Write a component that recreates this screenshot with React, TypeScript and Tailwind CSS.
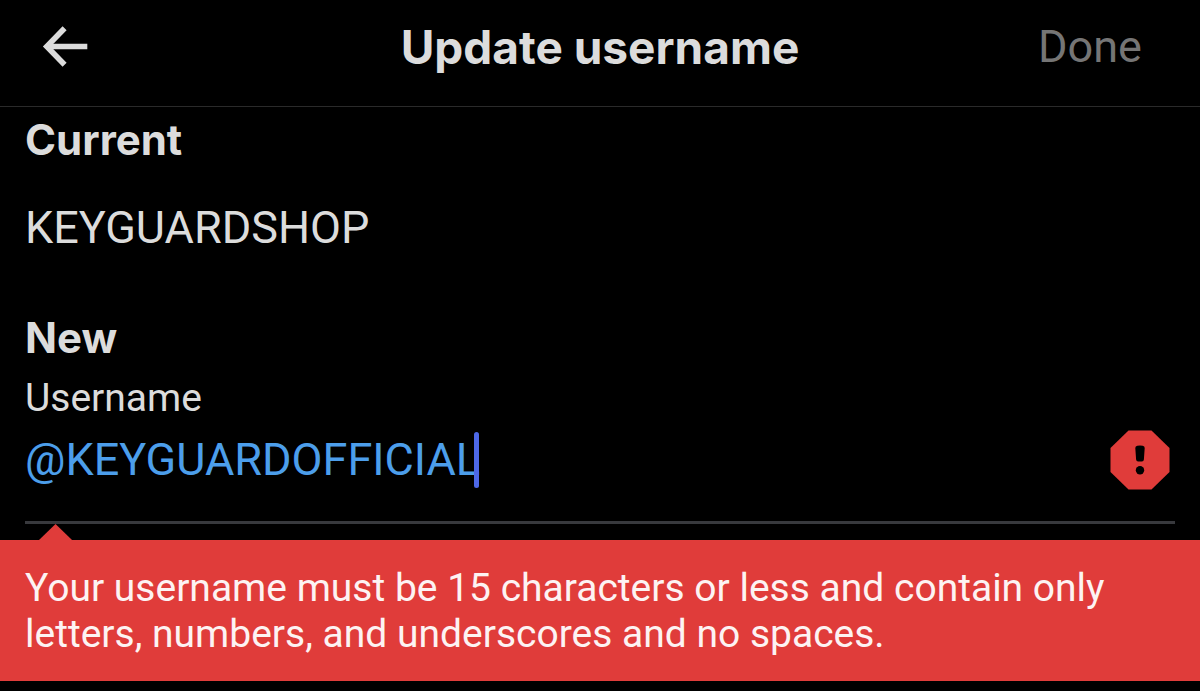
import { useState } from "react"

function BackArrow() {
  return (
    <svg className="h-12 w-12" viewBox="0 0 48 48" fill="none" stroke="currentColor" strokeWidth="5.6">
      <path d="M47.3 23.5H7" />
      <path d="M24.6 5.3L6.8 23.5l17.8 18.2" strokeLinejoin="miter" />
    </svg>
  )
}

function ErrorBadge() {
  return (
    <svg className="h-15 w-15 shrink-0" viewBox="0 0 60 60" role="img" aria-label="Error">
      <path d="M18.5 0.5h23L59.5 18v24l-18 17.5h-23L0.5 42V18z" fill="#e03c3a" />
      <path d="M25.3 18q0-2 2-2.3q2.7-0.5 5.4 0q2 0.3 2 2.3l-0.8 11.6q-0.2 1.9-2 1.9h-3.8q-1.8 0-2-1.9z" fill="#000" />
      <circle cx="30" cy="40.2" r="4.2" fill="#000" />
    </svg>
  )
}

export default function App() {
  const [username, setUsername] = useState("@KEYGUARDOFFICIAL")

  return (
    <div className="min-h-screen bg-black font-['Roboto',sans-serif] text-[#dcdcdc]">
      <header className="grid h-[107px] grid-cols-[1fr_auto_1fr] items-center border-b border-[#2a2a2a] px-10 pb-3">
        <button type="button" aria-label="Back" className="justify-self-start">
          <BackArrow />
        </button>
        <h1 className="font-['Inter',sans-serif] text-[46px] leading-14 font-bold">Update username</h1>
        <button type="button" disabled className="justify-self-end pr-[18px] text-[45px] leading-14 text-[#757575]">
          Done
        </button>
      </header>

      <main className="pt-[5px]">
        <section className="px-[25px]">
          <h2 className="font-['Inter',sans-serif] text-[42px] leading-14 font-bold">Current</h2>
          <p className="mt-8 text-[45px] leading-14">KEYGUARDSHOP</p>
        </section>

        <section className="mx-[25px] mt-[54px] border-b-3 border-[#38393d] pb-[31px]">
          <h2 className="font-['Inter',sans-serif] text-[42px] leading-14 font-bold">New</h2>
          <label htmlFor="username" className="mt-2 block text-[39px] leading-12">
            Username
          </label>
          <div className="mt-2 flex items-center justify-between pr-[5px]">
            <div className="flex items-center">
              <input
                id="username"
                type="text"
                value={username}
                onChange={(e) => setUsername(e.target.value)}
                aria-invalid="true"
                aria-describedby="username-error"
                className="h-14 field-sizing-content bg-transparent text-[45px] leading-14 text-[#4c9eeb] caret-transparent outline-none"
              />
              {/* Text cursor */}
              <span className="-ml-[6px] h-14 w-[5px] rounded-full bg-[#4d68e8]" />
            </div>
            <ErrorBadge />
          </div>
        </section>

        <div className="px-[39px]">
          <svg className="block h-4 w-[33px]" viewBox="0 0 33 16">
            <path d="M16.5 0L33 16H0z" fill="#e03c3a" />
          </svg>
        </div>
        <p id="username-error" role="alert" className="bg-[#e03c3a] px-[25px] pt-[25px] pb-6 text-[39px] leading-[46px] text-[#fdf3f3]">
          Your username must be 15 characters or less and contain only letters, numbers, and underscores and no spaces.
        </p>
      </main>
    </div>
  )
}
